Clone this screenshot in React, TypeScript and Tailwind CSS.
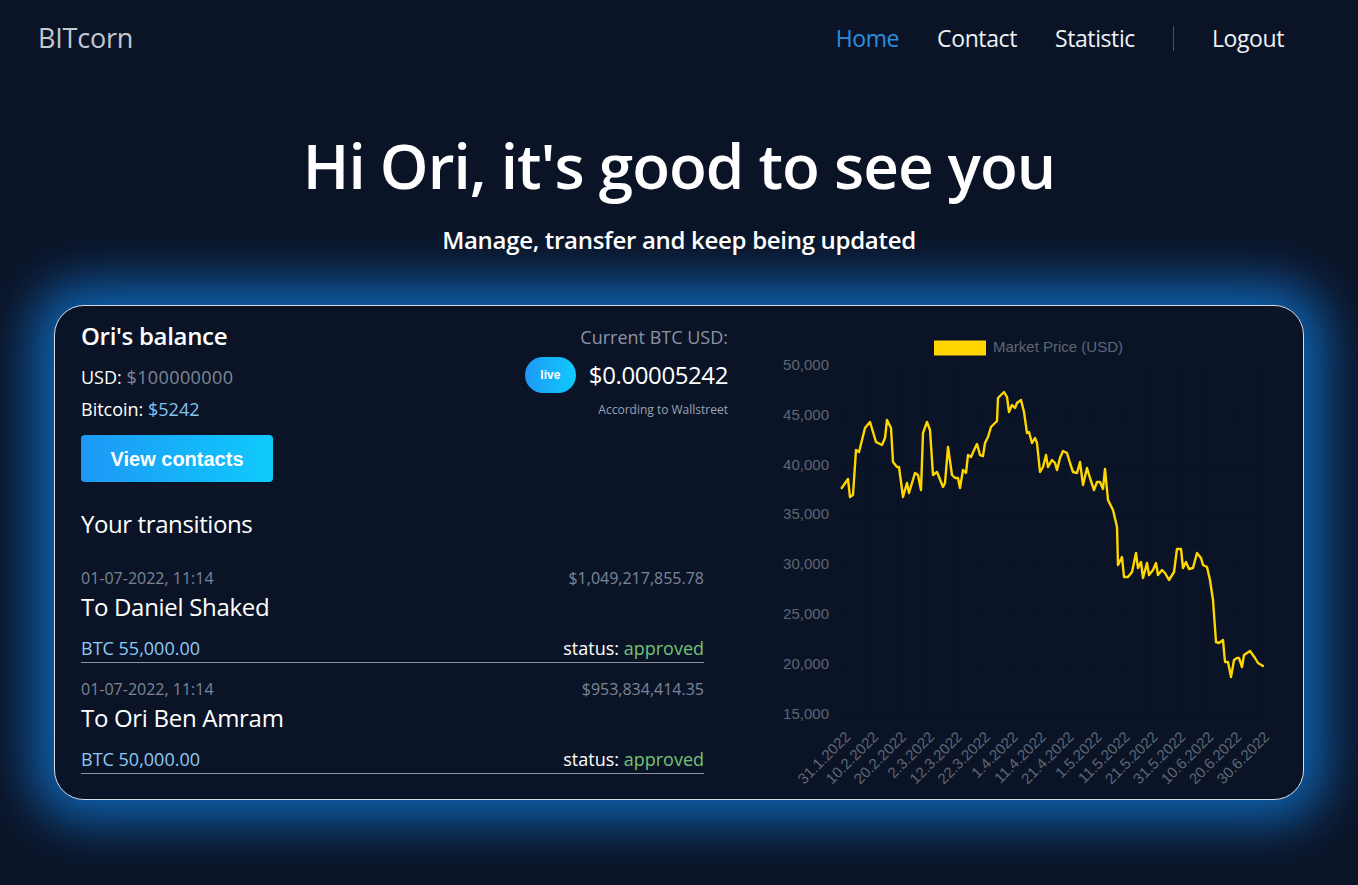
import React from "react";

const pts =
  "841.7,488 848,479 850,497 853,495 856,450 859,452 865,428 870,422 876,442 882,445 885,438 887,420 891,428 893,462 897,467 899,467 903,497 907,483 909,493 915,473 918,475 921,490 923,433 927,422 930,430 933,475 937,472 943,487 945,483 948,447 952,475 955,478 958,478 960,488 963,470 966,473 968,455 971,457 975,448 977,444 980,455 983,456 985,443 988,437 991,427 997,421 998,398 1004,392 1007,397 1009,412 1012,405 1015,408 1017,403 1021,400 1024,412 1027,433 1029,432 1032,443 1035,438 1037,443 1040,472 1043,467 1046,455 1048,467 1052,460 1055,463 1057,470 1060,458 1063,451 1067,453 1070,463 1073,472 1077,473 1080,462 1083,485 1087,468 1090,478 1094,490 1097,482 1100,482 1103,489 1105,469 1108,500 1113,510 1117,527 1118,565 1122,557 1124,577 1128,577 1132,572 1136,553 1138,568 1141,562 1143,578 1147,563 1149,575 1153,570 1156,563 1158,575 1162,570 1165,573 1169,580 1174,572 1177,549 1181,549 1183,568 1186,562 1189,569 1193,568 1197,553 1201,558 1203,565 1207,567 1210,580 1213,600 1216,642 1219,643 1223,640 1225,662 1228,662 1231,677 1234,660 1237,658 1239,658 1242,667 1244,655 1247,653 1250,651 1255,658 1258,663 1263,666";

const yLabels = ["50,000", "45,000", "40,000", "35,000", "30,000", "25,000", "20,000", "15,000"];
const xLabels = [
  "31.1.2022",
  "10.2.2022",
  "20.2.2022",
  "2.3.2022",
  "12.3.2022",
  "22.3.2022",
  "1.4.2022",
  "11.4.2022",
  "21.4.2022",
  "1.5.2022",
  "11.5.2022",
  "21.5.2022",
  "31.5.2022",
  "10.6.2022",
  "20.6.2022",
  "30.6.2022",
];

function Chart() {
  return (
    <svg
      width="520"
      height="465"
      viewBox="770 325 520 465"
      className="mt-[19px] ml-[42px] shrink-0"
      style={{ fontFamily: '"Liberation Sans", Arial, sans-serif' }}
    >
      <rect x="934" y="340.5" width="52" height="15" fill="#ffd600" />
      <text x="993" y="348" fontSize="15" fill="#5f6673" dominantBaseline="middle">
        Market Price (USD)
      </text>
      {yLabels.map((l, i) => {
        const y = 366 + i * 49.8;
        return (
          <g key={l}>
            <line x1="836" x2="1263" y1={y} y2={y} stroke="rgba(0,0,0,0.18)" strokeWidth="1" />
            <text x="829" y={y} fontSize="15" fill="#5f6673" textAnchor="end" dominantBaseline="middle">
              {l}
            </text>
          </g>
        );
      })}
      {xLabels.map((l, i) => {
        const x = 842.5 + i * 27.93;
        return (
          <g key={l}>
            <line x1={x} x2={x} y1="366" y2="722" stroke="rgba(0,0,0,0.18)" strokeWidth="1" />
            <text
              x={x + 6}
              y="735"
              fontSize="15"
              fill="#5f6673"
              textAnchor="end"
              dominantBaseline="middle"
              transform={`rotate(-45 ${x + 6} 735)`}
            >
              {l}
            </text>
          </g>
        );
      })}
      <polyline
        points={pts}
        fill="none"
        stroke="#ffd600"
        strokeWidth="2.4"
        strokeLinejoin="round"
        strokeLinecap="round"
      />
    </svg>
  );
}

function Tx({ amount, name, btc }: { amount: string; name: string; btc: string }) {
  return (
    <div className="border-b border-[#8a93a3] pb-[2px]">
      <div className="flex justify-between text-[16px] leading-[24px] text-[#7c8596]">
        <span>01-07-2022, 11:14</span>
        <span>{amount}</span>
      </div>
      <div className="mt-[1px] text-[24px] leading-[32px] tracking-[-0.3px] text-white">{name}</div>
      <div className="mt-[13px] flex justify-between text-[18px] leading-[24px]">
        <span className="text-[#8ccaf5]">{btc}</span>
        <span className="text-white">
          status: <span className="text-[#74c276]">approved</span>
        </span>
      </div>
    </div>
  );
}

export default function App() {
  return (
    <div
      className="min-h-[885px] w-full bg-[#0b1427] text-white"
      style={{ fontFamily: '"Open Sans", "Noto Sans", sans-serif' }}
    >
      <header className="flex h-[76px] items-center justify-between pl-[38px] pr-[74px]">
        <div className="text-[27px] tracking-[-0.2px] text-[#c3c8d0]">BITcorn</div>
        <nav className="flex items-center gap-[38px] text-[23px] tracking-[-0.4px]">
          <a className="text-[#2a8ee0]">Home</a>
          <a className="text-[#eef1f5]">Contact</a>
          <a className="text-[#eef1f5]">Statistic</a>
          <span className="h-[25px] w-px bg-[#4a5262]" />
          <a className="text-[#eef1f5]">Logout</a>
        </nav>
      </header>

      <h1 className="mt-[51px] text-center text-[62px] font-semibold leading-[76px] tracking-[-1px]">
        Hi Ori, it's good to see you
      </h1>
      <p className="mt-[21px] text-center text-[24px] font-semibold leading-[32px] tracking-[-0.3px]">
        Manage, transfer and keep being updated
      </p>

      <div className="mx-auto mt-[49px] flex h-[495px] w-[1250px] rounded-[30px] border border-[#d7dbe2] bg-[#0b1427] shadow-[0_0_50px_22px_rgba(16,112,200,0.85)]">
        <div className="ml-[26px] w-[647px] shrink-0 pt-[14px]">
          <div className="flex justify-between">
            <div>
              <h2 className="text-[24px] font-semibold leading-[32px] tracking-[-0.3px]">Ori's balance</h2>
              <p className="mt-[13px] text-[18px] leading-[24px]">
                USD: <span className="text-[#7d8799] tracking-[0.4px]">$100000000</span>
              </p>
              <p className="mt-[8px] text-[18px] leading-[24px]">
                Bitcoin: <span className="text-[#82c3f3]">$5242</span>
              </p>
              <button
                className="mt-[14px] h-[47px] w-[192px] rounded-[4px] bg-gradient-to-r from-[#1e98f6] to-[#10cafb] text-[20px] font-bold text-white"
                style={{ fontFamily: '"Liberation Sans", Arial, sans-serif' }}
              >
                View contacts
              </button>
            </div>
            <div className="flex flex-col items-end">
              <p className="mt-[5px] text-[18px] leading-[24px] text-[#8b93a3]">Current BTC USD:</p>
              <div className="mt-[8px] flex items-center gap-[13px]">
                <span
                  className="flex h-[36px] w-[51px] items-center justify-center rounded-full bg-gradient-to-r from-[#1e98f6] to-[#10cafb] text-[12px] font-bold text-white"
                  style={{ fontFamily: '"Liberation Sans", Arial, sans-serif' }}
                >
                  live
                </span>
                <span className="text-[24px] leading-[32px] tracking-[-0.4px] text-white">$0.00005242</span>
              </div>
              <p className="mt-[9px] text-[12px] leading-[16px] text-[#9aa3b2]">According to Wallstreet</p>
            </div>
          </div>

          <h3 className="mt-[26px] text-[24px] leading-[32px] tracking-[-0.4px]">Your transitions</h3>

          <div className="mt-[26px] flex w-[623px] flex-col gap-[14px]">
            <Tx amount="$1,049,217,855.78" name="To Daniel Shaked" btc="BTC 55,000.00" />
            <Tx amount="$953,834,414.35" name="To Ori Ben Amram" btc="BTC 50,000.00" />
          </div>
        </div>
        <Chart />
      </div>
    </div>
  );
}
